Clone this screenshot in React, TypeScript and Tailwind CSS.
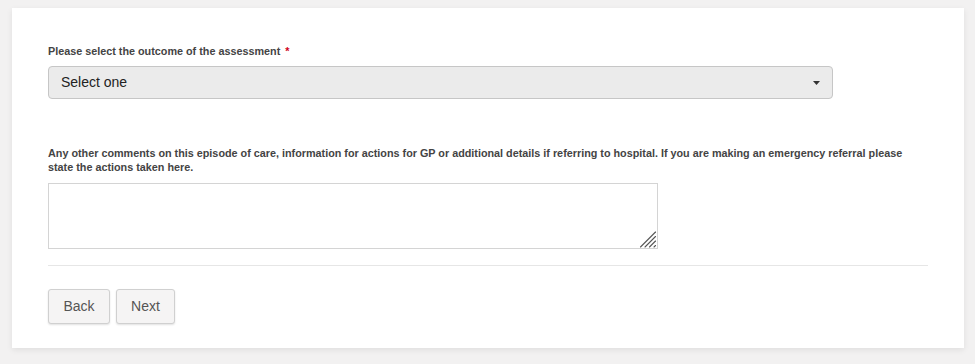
import React from "react";

const font = { fontFamily: '"Liberation Sans", Arial, sans-serif' };

function Caret() {
  return (
    <svg
      width="7"
      height="4"
      viewBox="0 0 7 4"
      className="pointer-events-none absolute right-[13px] top-[15px]"
    >
      <path d="M0 0h7L3.5 4z" fill="#333" />
    </svg>
  );
}

function Grip() {
  // hatched resize handle, drawn over the textarea corner
  return (
    <svg
      width="18"
      height="18"
      viewBox="0 0 18 18"
      className="pointer-events-none absolute bottom-[1px] right-[1px]"
    >
      <g stroke="#555" strokeWidth="1.1" strokeLinecap="round">
        <line x1="1.5" y1="17" x2="16.5" y2="2" />
        <line x1="6" y1="17" x2="16.5" y2="6.5" />
        <line x1="10.5" y1="17" x2="16.5" y2="11" />
        <line x1="15" y1="17" x2="16.5" y2="15.5" />
      </g>
    </svg>
  );
}

export default function App() {
  return (
    <div
      className="min-h-[364px] w-[975px] bg-[#f2f1f1] pt-[8px] pl-[12px]"
      style={font}
    >
      <div className="w-[952px] h-[340px] bg-white pl-[36px] pt-[36px] shadow-[0_2px_6px_rgba(0,0,0,0.08)]">
        <div className="w-[880px]">
          <label className="block text-[10.8px] leading-[14px] font-bold text-[#444]">
            Please select the outcome of the assessment{" "}
            <span className="text-[#d0021b] ml-[2px]">*</span>
          </label>
          <div className="relative mt-[8px] w-[785px]">
            <select
              defaultValue=""
              className="block h-[33px] w-full appearance-none rounded-[4px] border border-[#c6c6c6] bg-[#ebebeb] pl-[12px] text-[14px] text-[#222] outline-none"
              style={font}
            >
              <option value="">Select one</option>
            </select>
            <Caret />
          </div>

          <label className="mt-[47px] block text-[10.8px] leading-[14px] font-bold text-[#444]">
            Any other comments on this episode of care, information for actions
            for GP or additional details if referring to hospital. If you are
            making an emergency referral please state the actions taken here.
          </label>
          <div className="relative mt-[9px] w-[610px]">
            <textarea className="block h-[66px] w-full resize-none border border-[#d4d4d4] bg-white outline-none" />
            <Grip />
          </div>

          <div className="mt-[16px] h-px w-[880px] bg-[#e6e6e6]" />

          <div className="mt-[23px] flex gap-[6px]">
            <button className="h-[35px] w-[62px] rounded-[3px] border border-[#d0d0d0] bg-[#f5f4f4] text-[14px] text-[#555] shadow-[0_1px_2px_rgba(0,0,0,0.12)]">
              Back
            </button>
            <button className="h-[35px] w-[59px] rounded-[3px] border border-[#d0d0d0] bg-[#f5f4f4] text-[14px] text-[#555] shadow-[0_1px_2px_rgba(0,0,0,0.12)]">
              Next
            </button>
          </div>
        </div>
      </div>
    </div>
  );
}
